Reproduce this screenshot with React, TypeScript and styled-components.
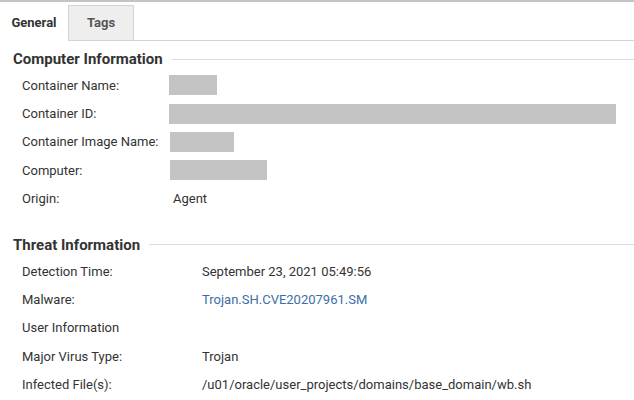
import React from "react";
import styled, { createGlobalStyle } from "styled-components";

const GlobalStyle = createGlobalStyle`
    html, body {
        margin: 0;
        padding: 0;
        background: #fff;
    }
    body {
        font-family: Roboto, "Liberation Sans", Arial, sans-serif;
        color: #333;
    }
`;

const Page = styled.div`
    width: 634px;
    height: 400px;
    overflow: hidden;
    border-top: 2px solid #c4c4c4;
    box-sizing: border-box;
`;

const TabBar = styled.div`
    display: flex;
    align-items: flex-end;
    height: 39px;
    padding-top: 2px;
    box-sizing: border-box;
`;

const Tab = styled.div<{ $active?: boolean }>`
    height: ${(p) => (p.$active ? "37px" : "36px")};
    box-sizing: border-box;
    display: flex;
    align-items: center;
    justify-content: center;
    font-size: 13px;
    font-weight: 700;
    color: ${(p) => (p.$active ? "#333" : "#555")};
    background: ${(p) => (p.$active ? "#fff" : "#eeeeee")};
    border: 1px solid ${(p) => (p.$active ? "transparent" : "#d4d4d4")};
    border-bottom: ${(p) => (p.$active ? "none" : "1px solid #d4d4d4")};
    width: ${(p) => (p.$active ? "68px" : "66px")};
    padding-bottom: 1px;
`;

const TabFill = styled.div`
    flex: 1;
    border-bottom: 1px solid #d4d4d4;
`;

const Section = styled.div<{ $top: number }>`
    padding-top: ${(p) => p.$top}px;
`;

const SectionTitle = styled.div`
    display: flex;
    align-items: center;
    gap: 9px;
    padding-left: 13px;
    font-size: 15px;
    font-weight: 700;
    color: #333;
    height: 20px;

    &::after {
        content: "";
        flex: 1;
        height: 1px;
        background: #dcdcdc;
    }
`;

const Rows = styled.div`
    padding-top: 2px;
`;

const Row = styled.div<{ $valueX: number }>`
    display: grid;
    grid-template-columns: ${(p) => p.$valueX - 22}px 1fr;
    align-items: center;
    height: 28.4px;
    padding-left: 22px;
    font-size: 13px;
    color: #333;
`;

const Label = styled.span``;

const Value = styled.span<{ $shift?: number }>`
    margin-left: ${(p) => p.$shift ?? 0}px;
    white-space: nowrap;
`;

const Link = styled.a`
    color: #3b6ea8;
    text-decoration: none;
`;

const Redacted = styled.div<{ $w: number; $shift?: number }>`
    width: ${(p) => p.$w}px;
    height: 20px;
    background: #c3c3c3;
    margin-left: ${(p) => p.$shift ?? 0}px;
`;

const App = () => {
    return (
        <>
            <GlobalStyle />
            <Page>
                <TabBar>
                    <Tab $active>General</Tab>
                    <Tab>Tags</Tab>
                    <TabFill />
                </TabBar>

                <Section $top={8}>
                    <SectionTitle>Computer Information</SectionTitle>
                    <Rows>
                        <Row $valueX={169}>
                            <Label>Container Name:</Label>
                            <Redacted $w={48} />
                        </Row>
                        <Row $valueX={169}>
                            <Label>Container ID:</Label>
                            <Redacted $w={447} />
                        </Row>
                        <Row $valueX={169}>
                            <Label>Container Image Name:</Label>
                            <Redacted $w={64} $shift={1} />
                        </Row>
                        <Row $valueX={169}>
                            <Label>Computer:</Label>
                            <Redacted $w={97} $shift={1} />
                        </Row>
                        <Row $valueX={169}>
                            <Label>Origin:</Label>
                            <Value $shift={4}>Agent</Value>
                        </Row>
                    </Rows>
                </Section>

                <Section $top={22}>
                    <SectionTitle>Threat Information</SectionTitle>
                    <Rows>
                        <Row $valueX={202}>
                            <Label>Detection Time:</Label>
                            <Value>September 23, 2021 05:49:56</Value>
                        </Row>
                        <Row $valueX={202}>
                            <Label>Malware:</Label>
                            <Value>
                                <Link href="#">Trojan.SH.CVE20207961.SM</Link>
                            </Value>
                        </Row>
                        <Row $valueX={202}>
                            <Label>User Information</Label>
                            <Value />
                        </Row>
                        <Row $valueX={202}>
                            <Label>Major Virus Type:</Label>
                            <Value>Trojan</Value>
                        </Row>
                        <Row $valueX={202}>
                            <Label>Infected File(s):</Label>
                            <Value>/u01/oracle/user_projects/domains/base_domain/wb.sh</Value>
                        </Row>
                    </Rows>
                </Section>
            </Page>
        </>
    );
};

export default App;
